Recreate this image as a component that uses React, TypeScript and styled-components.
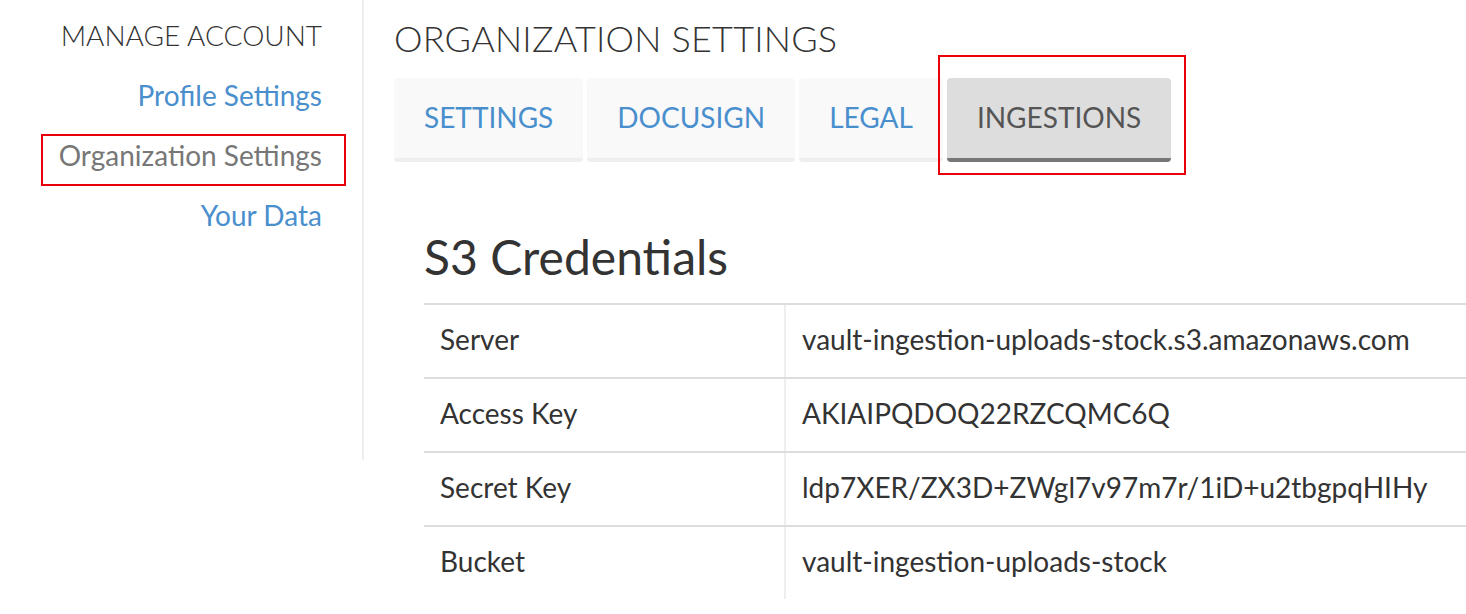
import styled, { createGlobalStyle, css } from "styled-components";

const GlobalStyle = createGlobalStyle`
  html, body {
    margin: 0;
    padding: 0;
    background: #fff;
  }
  body {
    font-family: Lato, "Liberation Sans", sans-serif;
    color: #333;
  }
`;

const ANNOTATION_RED = "#e8000b";

const Page = styled.div`
  display: flex;
  align-items: flex-start;
  width: 1466px;
  overflow: hidden;
`;

const Sidebar = styled.aside`
  box-sizing: border-box;
  flex: none;
  width: 364px;
  height: 460px;
  padding: 14px 16px 0 0;
  border-right: 2px solid #eee;
  display: flex;
  flex-direction: column;
  align-items: flex-end;
  gap: 8px;
`;

const itemBox = css`
  box-sizing: border-box;
  height: 52px;
  margin: 0;
  padding: 0 22px 8px 16px;
  display: flex;
  align-items: center;
  border: 2px solid transparent;
  line-height: 1.2;
  white-space: nowrap;
`;

const SideTitle = styled.h3`
  ${itemBox};
  font-size: 28px;
  font-weight: 300;
  color: #333;
`;

const SideLink = styled.a<{ $active?: boolean }>`
  ${itemBox};
  font-size: 28px;
  font-weight: 400;
  text-decoration: none;
  cursor: pointer;
  color: ${({ $active }) => ($active ? "#777" : "#4a8fcd")};
  border-color: ${({ $active }) => ($active ? ANNOTATION_RED : "transparent")};
`;

const Main = styled.main`
  flex: 1;
  min-width: 0;
  padding: 17px 0 0 30px;
`;

const Title = styled.h1`
  margin: 0;
  font-size: 36px;
  font-weight: 300;
  letter-spacing: 0.2px;
  line-height: 1.2;
  color: #333;
`;

const Tabs = styled.nav`
  display: flex;
  gap: 4px;
  margin-top: 18px;
`;

const Tab = styled.a<{ $active?: boolean }>`
  position: relative;
  box-sizing: border-box;
  height: 84px;
  padding: 0 30px 2px;
  display: flex;
  align-items: center;
  border-radius: 4px;
  font-size: 28px;
  font-weight: 400;
  text-decoration: none;
  cursor: pointer;
  background: ${({ $active }) => ($active ? "#ddd" : "#f9f9f9")};
  border-bottom: 4px solid ${({ $active }) => ($active ? "#777" : "#eee")};
  color: ${({ $active }) => ($active ? "#555" : "#4a8fcd")};

  ${({ $active }) =>
    $active &&
    css`
      &::after {
        content: "";
        position: absolute;
        top: -23px;
        left: -9px;
        right: -15px;
        bottom: -17px;
        border: 2px solid ${ANNOTATION_RED};
        pointer-events: none;
      }
    `}
`;

const Panel = styled.section`
  padding-left: 30px;
`;

const PanelTitle = styled.h2`
  margin: 66px 0 17px;
  font-size: 48px;
  font-weight: 400;
  line-height: 1.2;
  color: #333;
`;

const Table = styled.div`
  width: 100%;
`;

const Row = styled.div`
  box-sizing: border-box;
  display: grid;
  grid-template-columns: 360px 1fr;
  height: 74px;
  border-top: 2px solid #ddd;
`;

const Cell = styled.div<{ $value?: boolean }>`
  display: flex;
  align-items: center;
  padding-left: 16px;
  padding-bottom: 2px;
  font-size: 28px;
  line-height: 1.2;
  color: #333;
  white-space: nowrap;
  border-left: ${({ $value }) => ($value ? "2px solid #eee" : "none")};
`;

const credentials = [
  { label: "Server", value: "vault-ingestion-uploads-stock.s3.amazonaws.com" },
  { label: "Access Key", value: "AKIAIPQDOQ22RZCQMC6Q" },
  { label: "Secret Key", value: "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" },
  { label: "Bucket", value: "vault-ingestion-uploads-stock" },
];

const tabs = ["SETTINGS", "DOCUSIGN", "LEGAL", "INGESTIONS"];

export default function App() {
  return (
    <>
      <GlobalStyle />
      <Page>
        <Sidebar>
          <SideTitle>MANAGE ACCOUNT</SideTitle>
          <SideLink>Profile Settings</SideLink>
          <SideLink $active>Organization Settings</SideLink>
          <SideLink>Your Data</SideLink>
        </Sidebar>
        <Main>
          <Title>ORGANIZATION SETTINGS</Title>
          <Tabs>
            {tabs.map((t) => (
              <Tab key={t} $active={t === "INGESTIONS"}>
                {t}
              </Tab>
            ))}
          </Tabs>
          <Panel>
            <PanelTitle>S3 Credentials</PanelTitle>
            <Table>
              {credentials.map((c) => (
                <Row key={c.label}>
                  <Cell>{c.label}</Cell>
                  <Cell $value>{c.value}</Cell>
                </Row>
              ))}
            </Table>
          </Panel>
        </Main>
      </Page>
    </>
  );
}
